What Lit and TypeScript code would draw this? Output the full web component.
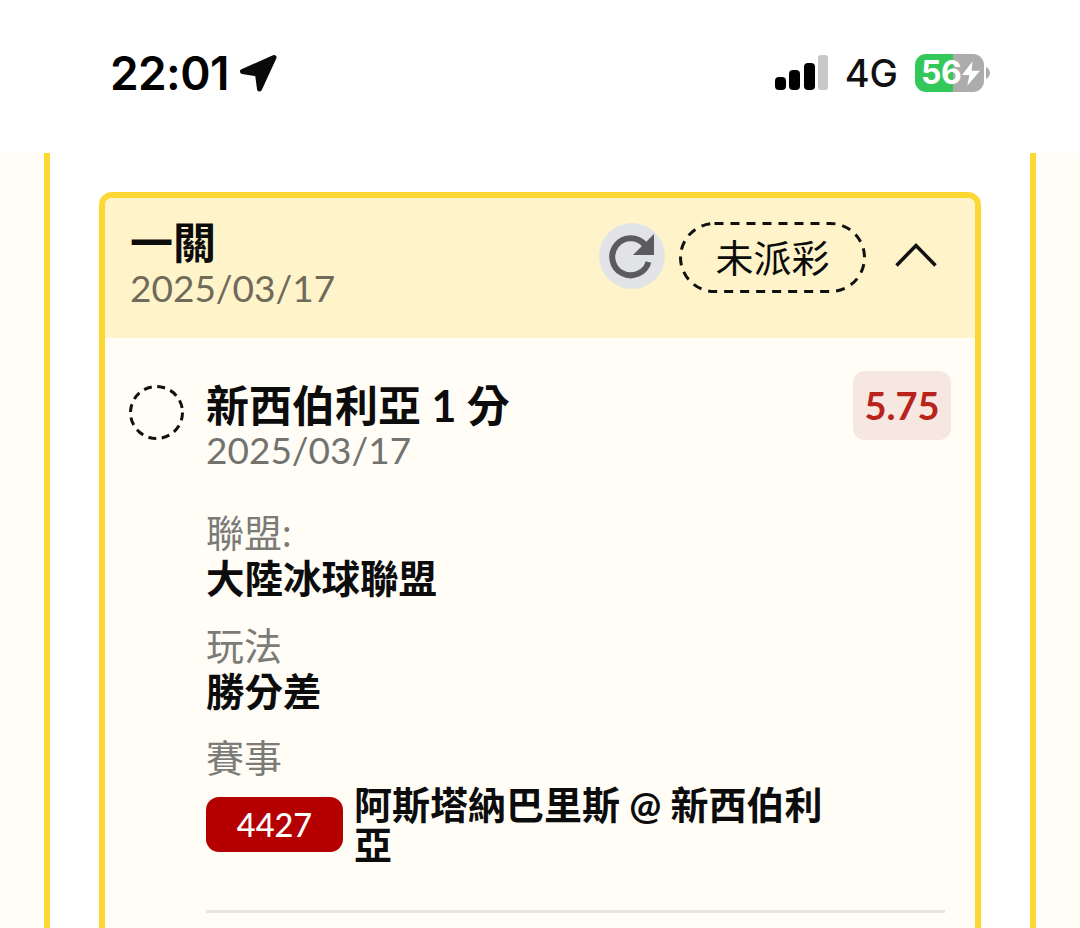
import {LitElement, css, html} from 'lit';
import {customElement} from 'lit/decorators.js';

@customElement('app-root')
export class AppRoot extends LitElement {
  static styles = css`
    :host {
      display: block;
      width: 1080px;
      height: 928px;
      overflow: hidden;
      background: #fffdf6;
      font-family: Lato, "Noto Sans CJK TC", sans-serif;
      color: #0c0c0c;
    }

    /* iOS status bar */
    .status {
      box-sizing: border-box;
      height: 153px;
      background: #fff;
      display: flex;
      align-items: flex-start;
      justify-content: space-between;
      padding: 46px 90px 0 110px;
    }
    .status-left, .status-right { display: flex; align-items: center; }
    .time {
      font: 600 46px/54px Inter, sans-serif;
      letter-spacing: -0.6px;
      color: #000;
    }
    .arrow { margin-left: 10px; }
    .status-right { height: 54px; }
    .net {
      font: 500 38px/54px Inter, sans-serif;
      color: #111;
      margin: 0 17px 0 17px;
    }
    .battery {
      position: relative;
      width: 69px;
      height: 38px;
      border-radius: 11px;
      overflow: hidden;
      background: linear-gradient(90deg, #34c759 0 38px, #acacac 38px);
      color: #fff;
      font: 700 32px/38px Inter, sans-serif;
      padding-left: 6px;
      box-sizing: border-box;
      letter-spacing: -0.5px;
    }
    .bolt { position: absolute; left: 47px; top: 7px; }
    .nub { margin-left: 2px; }

    /* page frame */
    .frame {
      margin: 0 44px;
      height: 775px;
      box-sizing: border-box;
      background: #fff;
      border-left: 6px solid #fdd835;
      border-right: 6px solid #fdd835;
      padding: 39px 49px 0;
    }
    .card {
      border: 6px solid #fdd835;
      border-radius: 13px;
      background: #fffdf6;
      overflow: hidden;
    }
    .card-head {
      background: #fff3c9;
      height: 140px;
      box-sizing: border-box;
      padding: 22px 38px 0 25px;
      display: flex;
      justify-content: space-between;
    }
    .title {
      font-weight: 700;
      font-size: 43px;
      line-height: 46px;
    }
    .date {
      font-size: 37px;
      line-height: 44px;
      color: #6f6a59;
    }
    .head-actions { display: flex; align-items: center; height: 66px; margin-top: 3px; }
    .refresh {
      width: 66px;
      height: 66px;
      border-radius: 50%;
      background: #e2e3e6;
      display: flex;
      align-items: center;
      justify-content: center;
      margin-right: 14px;
    }
    .pill {
      position: relative;
      width: 187px;
      height: 71px;
      margin-top: 2px;
      font-size: 38px;
      line-height: 1;
      display: flex;
      align-items: center;
      justify-content: center;
    }
    .pill svg { position: absolute; left: 0; top: 0; }
    .chevron { margin-left: 29px; margin-top: -2px; }

    .card-body { padding: 33px 24px 80px 24px; }
    .bet { display: flex; align-items: flex-start; }
    .radio {
      flex: none;
      margin: 14px 22px 0 0;
    }
    .bet-main { flex: 1; min-width: 0; }
    .bet-top { display: flex; justify-content: space-between; height: 102px; }
    .heading {
      font-weight: 700;
      font-size: 43px;
      line-height: 46px;
      padding-top: 12px;
    }
    .bet .date { color: #72726e; margin-top: -1px; }
    .odds {
      box-sizing: border-box;
      padding-bottom: 2px;
      background: #f6e8e1;
      color: #b8231b;
      font-weight: 700;
      font-size: 38px;
      width: 98px;
      height: 69px;
      border-radius: 12px;
      display: flex;
      align-items: center;
      justify-content: center;
    }
    .field { margin-top: 20.500px; }
    .bet-top + .field { margin-top: 36px; }
    .label {
      font-size: 38px;
      line-height: 46px;
      color: #7b7b78;
    }
    .value {
      font-weight: 700;
      font-size: 38.500px;
      line-height: 46px;
    }
    .game { display: flex; align-items: flex-start; margin-top: 4px; }
    .game-no {
      flex: none;
      width: 137px;
      height: 55px;
      margin-top: 13px;
      border-radius: 13px;
      background: #b40000;
      color: #fff;
      font-size: 32.500px;
      font-weight: 500;
      display: flex;
      align-items: center;
      justify-content: center;
    }
    .game-name {
      width: 480px;
      margin-left: 11px;
      font-weight: 700;
      font-size: 38px;
      line-height: 40px;
    }
    .rule { height: 3px; background: #e8e6df; margin: 46px 6px 0 0; }
  `;

  render() {
    return html`
      <div class="status">
        <div class="status-left">
          <span class="time">22:01</span>
          <svg class="arrow" width="38" height="38" viewBox="0 0 38 38">
            <path d="M35 3.500 3.500 17.500 18.500 20 20.500 35z" fill="#0a0a0a" stroke="#0a0a0a" stroke-width="5" stroke-linejoin="round"/>
          </svg>
        </div>
        <div class="status-right">
          <svg width="54" height="36" viewBox="0 0 54 36">
            <rect x="1" y="22" width="11" height="13" rx="4" fill="#000"/>
            <rect x="15" y="15" width="11" height="20" rx="4" fill="#000"/>
            <rect x="30" y="8" width="11" height="27" rx="4" fill="#000"/>
            <rect x="44" y="0" width="10" height="35" rx="3" fill="#c8c8c8"/>
          </svg>
          <span class="net">4G</span>
          <div class="battery">56
            <svg class="bolt" width="18" height="25" viewBox="0 0 17 23">
              <path d="M10 0 0 13h7l-2 10L17 9h-8z" fill="#fff"/>
            </svg>
          </div>
          <svg class="nub" width="4" height="12" viewBox="0 0 4 12">
            <path d="M0 0c2 1 4 3 4 6s-2 5-4 6z" fill="#acacac"/>
          </svg>
        </div>
      </div>
      <div class="frame">
        <div class="card">
          <div class="card-head">
            <div>
              <div class="title">一關</div>
              <div class="date">2025/03/17</div>
            </div>
            <div class="head-actions">
              <div class="refresh">
                <svg width="50" height="50" viewBox="0 0 50 50">
                  <path d="M41.500 31a18.500 18.500 0 1 1-3.500-17" fill="none" stroke="#5b5b5e" stroke-width="6"/>
                  <path d="M47 3V24H26z" fill="#5b5b5e"/>
                </svg>
              </div>
              <div class="pill">
                <svg width="187" height="71" viewBox="0 0 187 71">
                  <rect x="1.500" y="1.500" width="184" height="68" rx="34" fill="none" stroke="#111" stroke-width="3" stroke-dasharray="9 7"/>
                </svg>
                未派彩
              </div>
              <svg class="chevron" width="42" height="24" viewBox="0 0 42 24">
                <path d="M1.500 22.500 21 2.500l19.500 20" fill="none" stroke="#111" stroke-width="3.500"/>
              </svg>
            </div>
          </div>
          <div class="card-body">
            <div class="bet">
              <svg class="radio" width="55" height="55" viewBox="0 0 55 55">
                <circle cx="27.500" cy="27.500" r="26" fill="none" stroke="#111" stroke-width="3" stroke-dasharray="8 5.610"/>
              </svg>
              <div class="bet-main">
                <div class="bet-top">
                  <div>
                    <div class="heading">新西伯利亞 1 分</div>
                    <div class="date">2025/03/17</div>
                  </div>
                  <div class="odds">5.75</div>
                </div>
                <div class="field">
                  <div class="label">聯盟:</div>
                  <div class="value">大陸冰球聯盟</div>
                </div>
                <div class="field">
                  <div class="label">玩法</div>
                  <div class="value">勝分差</div>
                </div>
                <div class="field">
                  <div class="label">賽事</div>
                  <div class="game">
                    <div class="game-no">4427</div>
                    <div class="game-name">阿斯塔納巴里斯 @ 新西伯利亞</div>
                  </div>
                </div>
                <div class="rule"></div>
              </div>
            </div>
          </div>
        </div>
      </div>
    `;
  }
}
